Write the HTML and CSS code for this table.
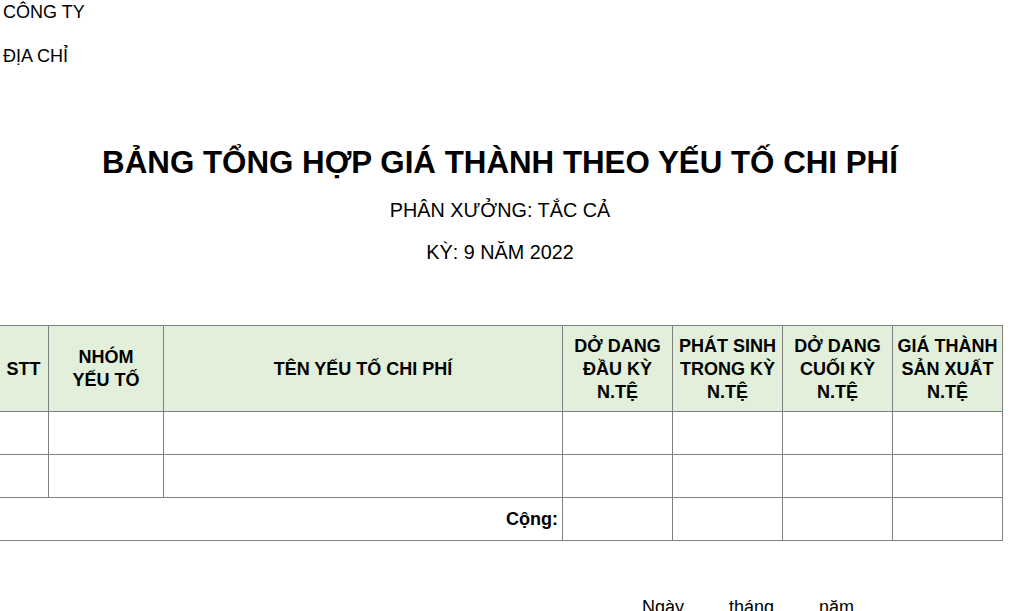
FILE: index.html
```html
<!DOCTYPE html>
<html lang="vi">
<head>
<meta charset="utf-8">
<title>Bảng tổng hợp giá thành theo yếu tố chi phí</title>
<link rel="stylesheet" href="styles.css">
</head>
<body>
<div class="page">
  <div class="company">CÔNG TY</div>
  <div class="address">ĐỊA CHỈ</div>
  <div class="heading">
    <h1 class="title">BẢNG TỔNG HỢP GIÁ THÀNH THEO YẾU TỐ CHI PHÍ</h1>
    <div class="sub sub-first">PHÂN XƯỞNG: TẮC CẢ</div>
    <div class="sub">KỲ: 9 NĂM 2022</div>
  </div>
  <table class="report">
    <colgroup>
      <col class="c-stt"><col class="c-group"><col class="c-name">
      <col class="c-num"><col class="c-num"><col class="c-num"><col class="c-num">
    </colgroup>
    <thead>
      <tr>
        <th>STT</th>
        <th>NHÓM<br>YẾU TỐ</th>
        <th>TÊN YẾU TỐ CHI PHÍ</th>
        <th>DỞ DANG<br>ĐẦU KỲ<br>N.TỆ</th>
        <th>PHÁT SINH<br>TRONG KỲ<br>N.TỆ</th>
        <th>DỞ DANG<br>CUỐI KỲ<br>N.TỆ</th>
        <th>GIÁ THÀNH<br>SẢN XUẤT<br>N.TỆ</th>
      </tr>
    </thead>
    <tbody>
      <tr><td></td><td></td><td></td><td></td><td></td><td></td><td></td></tr>
      <tr><td></td><td></td><td></td><td></td><td></td><td></td><td></td></tr>
      <tr class="total"><td colspan="3" class="total-label">Cộng:</td><td></td><td></td><td></td><td></td></tr>
    </tbody>
  </table>
  <div class="sign-date"><span>Ngày</span><span>tháng</span><span>năm</span></div>
</div>
</body>
</html>
```

FILE: styles.css
```css
html, body {
  margin: 0;
  padding: 0;
  background: #ffffff;
}
body {
  font-family: "Liberation Sans", Arial, sans-serif;
  color: #000000;
  overflow: hidden;
}
.page {
  width: 1033px;
  height: 611px;
  overflow: hidden;
}
.company {
  font-size: 18px;
  line-height: 25px;
  padding-left: 3px;
}
.address {
  font-size: 18px;
  line-height: 25px;
  padding-left: 3px;
  margin-top: 19px;
}
.heading {
  width: 1004px;
  margin-left: -2px;
  text-align: center;
}
.title {
  margin: 74px 0 0 0;
  font-size: 31.3px;
  line-height: 40px;
  font-weight: bold;
}
.sub {
  font-size: 19.8px;
  line-height: 30px;
  margin-top: 12px;
}
.report {
  border-collapse: collapse;
  table-layout: fixed;
  width: 1004px;
  margin-left: -2px;
  margin-top: 58px;
}
.c-stt { width: 50px; }
.c-group { width: 115px; }
.c-name { width: 399px; }
.c-num { width: 110px; }
.report th,
.report td {
  border: 1px solid #7f7f7f;
  padding: 0;
}
.report th {
  background: #e2efda;
  font-size: 18px;
  line-height: 23px;
  font-weight: bold;
  height: 84px;
  padding-top: 1px;
  text-align: center;
  vertical-align: middle;
}
.report td {
  height: 42px;
}
.total-label {
  text-align: right;
  font-weight: bold;
  font-size: 18px;
  padding-right: 4px !important;
}
.sign-date {
  margin-top: 51px;
  font-size: 18px;
  line-height: 30px;
  padding-left: 642px;
  display: flex;
}
.sign-date span:nth-child(1) { width: 87px; }
.sign-date span:nth-child(2) { width: 90px; }
```
